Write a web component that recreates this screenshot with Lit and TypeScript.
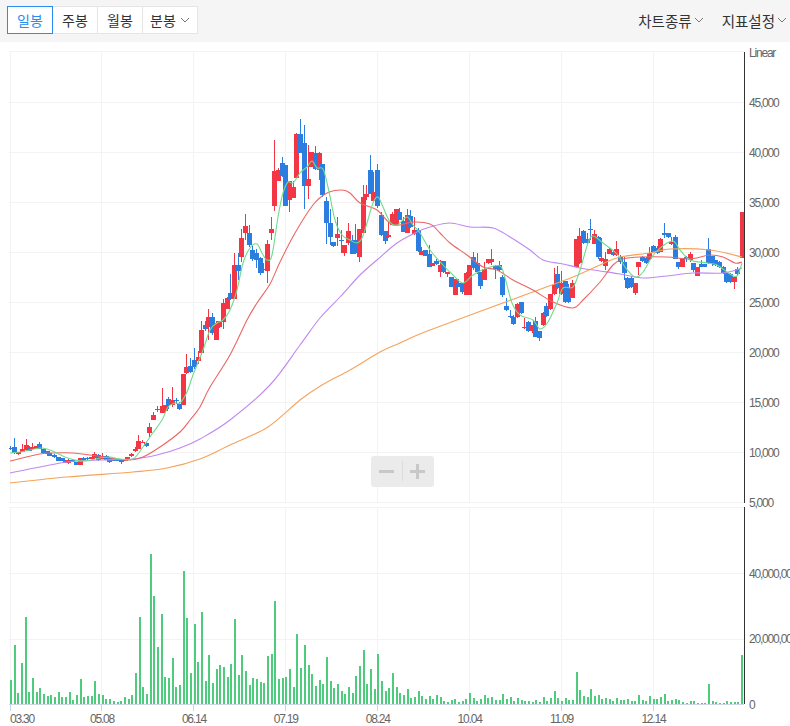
import { LitElement, css, html, svg } from 'lit'
import { customElement } from 'lit/decorators.js'

// rows: x, up (red) or down (blue), body top, body bottom, wick top, wick bottom
// everything is in page pixels, price scale is 10px per 1,000
type Candle = [number, number, number, number, number, number]
const CANDLES: Candle[] = [
  [10,0,448,449,446,450],[14.3,0,447,453,438,454],[18,1,452,454,452,455],[22,1,449,452,444,452],
  [25.7,1,445,450,439,451],[29,0,447,451,446,451],[32.3,1,447,449,443,449],[36,1,446,449,446,449],
  [39.3,0,444,449,442,449],[43.3,0,449,453,449,453],[47,0,451,454,451,454],[49.3,0,453,456,453,456],
  [54,0,455,457,454,458],[58.3,0,457,461,457,461],[61.7,0,458,461,458,461],[65,0,460,463,460,463],
  [68.3,1,460,463,459,464],[72.3,0,460,462,459,462],[76.3,0,462,465,462,465],[80.3,1,458,465,458,465],
  [83.3,0,458,460,457,461],[87.3,0,458,459,457,461],[91.3,1,457,459,457,459],[94.3,1,454,458,452,459],
  [98.3,0,455,460,454,461],[102.3,1,456,459,453,459],[106,0,456,460,455,460],[109.3,0,458,462,457,463],
  [113.3,0,459,461,459,461],[116.7,0,459,461,459,461],[120.7,0,460,462,459,464],[124.7,1,459,461,458,461],
  [127,1,457,460,457,460],[131.3,1,454,456,453,457],[135.3,1,449,451,447,452],[138.3,1,441,449,435,449],
  [142.3,1,441.5,442.5,440,443],[146.3,0,443,446,442,447],[149.3,1,427,433,423,437],[153.3,1,415,420,412,420],
  [157,1,408.5,409.5,406,412],[161.7,1,406,413,388,413],[164.5,1,405,411,405,412],[168.3,0,399,405,397,409],
  [172.3,1,400,405,387,407],[175.7,0,399.5,400.5,398,404],[179.3,0,404,409,402,410],[183,1,374,405,374,405],
  [186,1,367,373,354,374],[190,0,366,372,358,373],[194,0,360,367,348,369],[197.7,1,357,361,351,364],
  [201.3,1,330,353,321,355],[205.3,0,325,329,321,331],[208,1,317,327,309,340],[212.3,0,317,333,313,335],
  [216.3,1,323,340,321,340],[219,1,321,327,321,328],[223.3,1,303,322,299,329],[227.3,1,298,309,297,309],
  [230,0,293,299,274,300],[234.3,1,265,299,253,299],[238.3,0,265,271,253,280],[241.3,1,238,257,229,262],
  [245.3,1,226,233,214,240],[249.3,0,233,245,225,247],[252.3,0,250,259,246,261],[256.3,0,253,260,249,268],
  [260.3,0,258,273,257,275],[263.3,1,269,270,263,273],[267.3,1,244,271,240,283],[271.3,1,229,233,217,240],
  [274.3,1,171,206,140,211],[278.3,1,170,181,168,181],[282.3,0,163,176,157,177],[285.3,0,165,206,165,206],
  [289.3,1,181,200,181,212],[293.3,1,187,198,181,198],[296.3,1,134,178,133,178],[300.3,0,134,153,119,153],
  [304.3,0,143,186,125,209],[308.3,1,179,186,145,199],[311.3,1,152,167,152,167],[315.3,0,153,169,146,170],
  [319.3,1,153,170,152,180],[322.3,0,164,195,164,197],[326.3,0,201,223,197,244],[330.3,0,223,237,209,245],
  [333.3,0,242,246,242,247],[337.3,1,234,238,217,246],[341.3,0,240,241,230,253],[344.3,1,245,253,245,256],
  [348.3,1,231,243,223,245],[352.3,0,240,254,235,254],[355.3,0,240,253,224,254],[359.3,1,229,257,229,262],
  [363.3,1,197,233,185,233],[366.3,1,194,197,185,200],[370.3,0,170,194,155,194],[373.3,1,192,201,172,201],
  [377.3,0,170,206,164,208],[381.3,0,215,235,212,236],[385.3,0,231,241,231,244],[388.3,1,235,237,222,238],
  [392.3,1,214,225,212,225],[396.3,1,209,225,209,225],[399.3,0,212,220,208,220],[403.3,0,221,232,217,232],
  [407.3,1,215,233,209,233],[410.3,0,216,227,210,228],[414.3,1,230,234,217,235],[418.3,0,230,251,228,252],
  [421.3,1,251,255,247,255],[425.3,0,250,256,250,256],[429.3,0,254,267,245,267],[432.3,1,263,266,263,266],
  [436.3,0,261,264,259,265],[440,1,265,272,260,277],[443.3,0,261,272,261,273],[447.3,1,272,274,272,277],
  [451.3,0,277,287,277,287],[455.3,1,279,295,279,295],[458,0,283,287,279,287],[462,0,283,292,283,294],
  [466,1,273,295,272,295],[469,1,265,295,265,295],[473,0,257,268,252,270],[477,0,263,272,253,274],
  [480,0,272,286,272,289],[484,1,269,280,262,280],[488,1,259,263,259,264],[491.3,1,259,262,249,265],
  [495.3,0,266,269,265,279],[499.3,0,265,270,261,271],[502.3,0,277,295,275,297],[506.3,0,306,310,298,311],
  [510.3,0,315.5,316.5,310,318],[513,0,317,324,315,325],[517,1,304,317,303,318],[521,0,302,313,302,314],
  [524,1,326.5,327.5,318,329],[528,0,322,331,321,332],[532,1,325,331,325,333],[535.3,0,321,337,317,337],
  [539.3,0,331,338,331,341],[543.3,1,313,325,312,326],[546.3,0,306,316,303,317],[550.3,1,294,309,294,310],
  [554.3,1,285,294,268,295],[557.3,0,274,288,266,289],[561.3,1,283,294,271,295],[565.3,0,281,302,281,303],
  [568.3,0,288,302,284,303],[572.3,1,283,298,280,298],[576.3,1,239,267,239,267],[579.3,1,236,263,228,264],
  [583.3,0,231,243,230,244],[587.3,0,239,243,233,245],[590.3,0,229,230,219,240],[594.3,1,234,244,230,244],
  [598.3,0,237,257,236,259],[601,1,258,261,238,262],[605,1,259,266,252,270],[609,1,249,254,248,254],
  [613,0,252,255,250,256],[616,1,249,255,241,256],[620,0,257,262,255,264],[624,0,262,273,257,280],
  [627,0,278,288,277,289],[631,0,278,287,276,288],[635.3,1,283,293,283,295],[638.3,1,262,267,262,275],
  [642.3,0,257,261,256,262],[646.3,0,258,263,257,264],[649.3,1,253,259,247,260],[653.3,0,246,252,245,253],
  [657.3,0,248,253,246,254],[660.3,1,239,252,238,252],[664.3,0,233,235,223,238],[668,0,233,237,233,238],
  [671.3,1,242,244,237,245],[675.3,0,237,259,235,259],[678.3,0,262,267,262,269],[682.3,1,258,267,258,267],
  [686.3,0,257,259,256,262],[690.3,1,254,260,252,262],[693.3,0,263,270,263,272],[697.3,1,267,276,267,276],
  [701.3,0,264,267,260,267],[704.3,0,264,267,264,267],[708.3,0,249,263,238,264],[712.3,0,256,263,256,266],
  [715.3,0,260,265,260,266],[719.3,0,262,267,261,268],[723.3,0,267,273,266,274],[726.3,0,273,282,272,283],
  [730.3,0,274,282,273,283],[734.3,1,277,282,277,289],[737.3,0,269,274,267,276],[742,1,212,258,212,258],
]

// bar heights in px above the volume baseline, 200 bars
const VOLUME = [
  24,59,11,41,87,12,26,12,16,10,8,9,7,12,7,7,12,4,9,25,7,8,8,23,10,9,5,5,3,2,3,7,5,9,31,87,17,10,150,108,
  57,90,27,26,46,17,19,133,86,31,80,42,92,23,49,21,35,39,37,27,40,85,29,49,33,19,26,25,22,21,48,50,103,25,
  26,27,35,17,70,36,59,39,30,18,24,20,47,23,16,20,13,10,17,11,28,38,54,20,35,15,50,23,13,16,31,17,11,9,15,
  6,7,13,8,5,8,5,9,7,3,2,4,5,2,3,5,11,6,3,5,9,6,7,4,4,10,5,7,3,6,4,3,3,2,4,2,7,3,6,13,6,3,6,4,4,32,14,8,7,
  15,8,9,5,6,5,3,6,4,4,5,3,3,9,4,3,8,5,5,7,10,3,4,5,4,2,1,3,3,1,1,1,20,3,2,1,1,3,2,2,2,49,
]

const MA5 = [[10,453],[20,452],[30,450],[40,448],[47,449],[55,452],[65,457],[75,460],[85,461],[100,458],[110,457],[120,459],[133,459],[143,447],[152,434],[162,420],[168,407],[175,403],[180,403],[187,392],[193,375],[203,350],[210,330],[217,323],[223,320],[230,310],[237,290],[243,263],[250,248],[257,244],[262,253],[267,260],[272,255],[278,217],[283,193],[288,182],[293,183],[300,173],[307,167],[312,161],[317,168],[323,169],[328,187],[335,220],[342,235],[350,240],[357,243],[362,238],[367,223],[373,203],[378,197],[383,207],[390,222],[397,225],[407,217],[413,225],[420,233],[430,250],[443,265],[453,275],[463,283],[473,275],[487,268],[500,266],[505,278],[512,303],[520,315],[533,320],[540,329],[548,322],[557,303],[563,288],[573,287],[580,270],[588,243],[593,236],[603,243],[617,254],[625,267],[635,277],[643,272],[655,253],[672,241],[680,250],[690,260],[707,263],[717,265],[730,274],[737,276],[742,263]]
const MA20 = [[10,461],[40,454],[53,453],[73,453],[97,456],[127,460],[143,457],[160,447],[180,432],[190,420],[200,407],[210,387],[230,355],[247,320],[257,303],[270,284],[280,262],[295,233],[313,205],[327,193],[342,190],[350,193],[360,203],[377,210],[393,225],[413,222],[430,224],[440,233],[450,243],[467,255],[483,267],[497,270],[513,280],[533,290],[553,302],[573,308],[583,300],[600,282],[613,265],[623,259],[640,257],[667,257],[690,259],[710,255],[723,257],[735,263],[742,262]]
const MA60 = [[10,473],[40,467],[67,462],[100,460],[133,459],[157,455],[180,448],[200,439],[230,420],[270,385],[300,345],[320,318],[340,297],[360,275],[377,260],[397,243],[417,232],[430,227],[450,223],[470,227],[493,228],[510,237],[530,250],[543,260],[563,264],[580,268],[600,271],[620,274],[643,278],[667,276],[693,273],[723,273],[742,268]]
const MA120 = [[10,483],[67,477],[133,472],[167,468],[200,459],[230,445],[268,427],[300,400],[322,385],[350,370],[380,352],[400,343],[430,330],[530,293],[573,277],[600,265],[620,257],[650,253],[670,249],[710,250],[742,257]]

const PRICES = ['45,000','40,000','35,000','30,000','25,000','20,000','15,000','10,000','5,000']
const DATES = ['05.08','06.14','07.19','08.24','10.04','11.09','12.14']

// catmull-rom through the points, the lines on the real chart are smoothed too
function curve(pts: number[][]) {
  let d = `M${pts[0][0]} ${pts[0][1]}`
  for (let i = 0; i < pts.length - 1; i++) {
    const p0 = pts[i - 1] ?? pts[i]
    const p1 = pts[i]
    const p2 = pts[i + 1]
    const p3 = pts[i + 2] ?? p2
    const c1x = p1[0] + (p2[0] - p0[0]) / 6
    const c1y = p1[1] + (p2[1] - p0[1]) / 6
    const c2x = p2[0] - (p3[0] - p1[0]) / 6
    const c2y = p2[1] - (p3[1] - p1[1]) / 6
    d += `C${c1x.toFixed(1)} ${c1y.toFixed(1)} ${c2x.toFixed(1)} ${c2y.toFixed(1)} ${p2[0]} ${p2[1]}`
  }
  return d
}

const chevron = html`<svg class="chev" width="10" height="6" viewBox="0 0 10 6"><path d="M1 1l4 4 4-4" fill="none" stroke="#777" stroke-width="1"/></svg>`

@customElement('app-root')
export class AppRoot extends LitElement {
  static styles = css`
    :host {
      display: block;
      width: 790px;
      height: 726px;
      overflow: hidden;
      background: #fff;
      font-family: 'Noto Sans CJK KR', 'Liberation Sans', sans-serif;
    }
    .toolbar {
      display: flex;
      justify-content: space-between;
      align-items: center;
      height: 42px;
      box-sizing: border-box;
      padding: 0 3px 2px 7px;
      background: #f5f5f5;
      font-size: 14px;
      color: #333;
    }
    .tabs {
      display: flex;
    }
    .tab {
      display: flex;
      align-items: center;
      justify-content: center;
      gap: 4px;
      width: 44px;
      height: 26px;
      margin-left: -1px;
      background: #fff;
      border: 1px solid #e5e5e5;
    }
    .tab:first-child {
      margin-left: 0;
    }
    .tab.on {
      position: relative;
      color: #2a8cf0;
      border-color: #2a8cf0;
    }
    .tab.wide {
      width: 54px;
    }
    .menus {
      display: flex;
      gap: 18px;
      font-size: 14.5px;
    }
    .menu {
      display: flex;
      align-items: center;
      gap: 2px;
    }
    .chart {
      position: relative;
      height: 684px;
    }
    .chart > svg {
      display: block;
    }
    .grid {
      stroke: #f3f3f3;
      stroke-width: 1;
      shape-rendering: crispEdges;
    }
    .axis {
      stroke: #333;
      stroke-width: 1;
      shape-rendering: crispEdges;
    }
    .base {
      stroke: #cdd6e8;
      stroke-width: 1;
      shape-rendering: crispEdges;
    }
    .lbl {
      font-family: 'Liberation Sans', Arial, sans-serif;
      font-size: 12px;
      letter-spacing: -1.2px;
      fill: #666;
    }
    .ma {
      fill: none;
      stroke-width: 1.1;
    }
    .zoom {
      position: absolute;
      left: 371px;
      top: 414px;
      width: 63px;
      height: 31px;
      border-radius: 3px;
      background: #ebebeb;
    }
    .zoom svg {
      display: block;
    }
  `

  renderCandles() {
    return CANDLES.map(([x, up, top, bot, hi, lo]) => {
      const c = up ? '#f23645' : '#2b7de0'
      return svg`
        <rect x=${Math.round(x)} y=${hi} width="1" height=${lo - hi} fill=${c}></rect>
        <rect x=${Math.round(x) - 2} y=${top} width="5" height=${Math.max(bot - top, 1)} fill=${c}></rect>
      `
    })
  }

  render() {
    const vlines = [0, 1, 2, 3, 4, 5, 6, 7].map((k) => Math.floor(10 + 91.9 * k) + 0.5)
    return html`
      <div class="toolbar">
        <div class="tabs">
          <div class="tab on">일봉</div>
          <div class="tab">주봉</div>
          <div class="tab">월봉</div>
          <div class="tab wide">분봉${chevron}</div>
        </div>
        <div class="menus">
          <div class="menu">차트종류${chevron}</div>
          <div class="menu">지표설정${chevron}</div>
        </div>
      </div>
      <div class="chart">
        <svg width="790" height="684" viewBox="0 42 790 684">
          <defs>
            <clipPath id="plot"><rect x="9" y="50" width="735" height="453"></rect></clipPath>
          </defs>

          ${[51.5, 102.5, 152.5, 202.5, 252.5, 302.5, 352.5, 402.5, 452.5, 502.5, 507.5, 573.5, 639.5].map(
            (y) => svg`<line class="grid" x1="9" x2="744" y1=${y} y2=${y}></line>`,
          )}
          ${vlines.map((x) => svg`
            <line class="grid" x1=${x} x2=${x} y1="51" y2="502"></line>
            <line class="grid" x1=${x} x2=${x} y1="507" y2="704"></line>
            <line class="base" x1=${x} x2=${x} y1="704" y2="711"></line>
          `)}

          <g clip-path="url(#plot)" shape-rendering="crispEdges">${this.renderCandles()}</g>
          <g clip-path="url(#plot)">
            <path class="ma" stroke="#f5a35c" d=${curve(MA120)}></path>
            <path class="ma" stroke="#bf88f2" d=${curve(MA60)}></path>
            <path class="ma" stroke="#ee6464" d=${curve(MA20)}></path>
            <path class="ma" stroke="#6fdc8c" d=${curve(MA5)}></path>
          </g>

          ${VOLUME.map((h, i) => svg`<rect x=${Math.round(10 + i * 3.673)} y=${704 - h} width="2" height=${h} fill="#4fcb7e"></rect>`)}
          <line class="base" x1="9" x2="744" y1="704.5" y2="704.5"></line>

          <line class="axis" x1="744.5" x2="744.5" y1="52" y2="503"></line>
          <line class="axis" x1="744.5" x2="744.5" y1="507" y2="704"></line>

          <text class="lbl" x="749" y="57">Linear</text>
          ${PRICES.map((p, i) => svg`<text class="lbl" x="749" y=${107 + i * 50}>${p}</text>`)}
          <text class="lbl" x="749" y="578">40,000,000</text>
          <text class="lbl" x="749" y="643">20,000,000</text>
          <text class="lbl" x="749" y="709">0</text>

          <text class="lbl" x="10" y="723">03.30</text>
          ${DATES.map((d, i) => svg`<text class="lbl" x=${102 + i * 91.9} y="723" text-anchor="middle">${d}</text>`)}
        </svg>
        <div class="zoom">
          <svg width="63" height="31" viewBox="0 0 63 31">
            <rect x="8" y="14" width="15" height="3" fill="#c8c8c8"></rect>
            <rect x="31" y="5" width="1" height="20" fill="#dcdcdc"></rect>
            <rect x="39" y="14" width="15" height="3" fill="#c8c8c8"></rect>
            <rect x="45" y="8" width="3" height="15" fill="#c8c8c8"></rect>
          </svg>
        </div>
      </div>
    `
  }
}
